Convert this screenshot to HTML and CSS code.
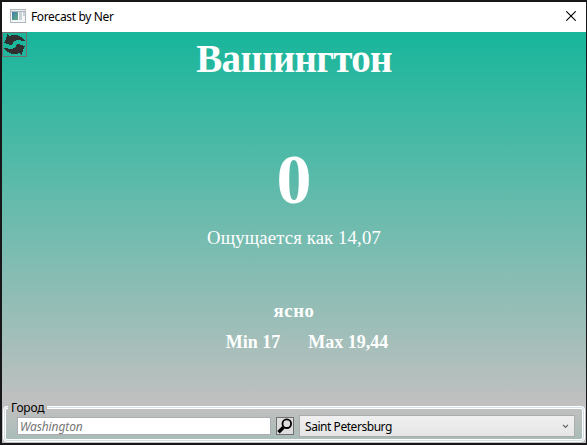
FILE: index.html
```html
<!DOCTYPE html>
<html lang="ru">
<head>
<meta charset="utf-8">
<title>Forecast by Ner</title>
<link rel="stylesheet" href="styles.css">
</head>
<body>
<div class="window">
  <header class="titlebar">
    <svg class="app-icon" width="16" height="14" viewBox="0 0 16 14">
      <defs><linearGradient id="pane" x1="0" y1="0" x2="1" y2="1"><stop offset="0" stop-color="#427fae"/><stop offset="1" stop-color="#61ad80"/></linearGradient></defs>
      <path fill="#b0b8bd" d="M0 0h16v14H0z"/><path fill="#e9edef" d="M1 1h14v1H1z"/><path fill="#f5f6f7" d="M1 3h14v10H1z"/>
      <path fill="url(#pane)" d="M2 3h6v8H2z"/><path fill="#c9d3d8" d="M9 3h3v8H9zM13 3h2v4h-2z"/>
    </svg>
    <span class="caption">Forecast by Ner</span>
    <svg class="close" width="10" height="10" viewBox="0 0 10 10"><path d="M.3.3l9.4 9.4M9.7.3L.3 9.7" stroke="#000" stroke-width="1.1"/></svg>
  </header>
  <main class="weather">
    <button class="refresh" aria-label="Обновить">
      <svg width="23" height="23" viewBox="0 0 23 23" fill="#303030">
        <path d="M4 1h1v1h1v1h2V2h7v1h2v1h2v1h1v1h1v1h1v1h-4V7h-5v1h-2v1h-1v2h-1v1H6v-1H3v-1H1V9h1V7h1V4h1z"/>
        <path d="M19 22h-1v-1h-1v-1h-2v1H8v-1H6v-1H4v-1H3v-1H2v-1H1v-1h4v1h5v-1h2v-1h1v-2h1v-1h3v1h3v1h2v1h-1v2h-1v3h-1z"/>
      </svg>
    </button>
    <h1 class="city">Вашингтон</h1>
    <div class="temp">0</div>
    <div class="feels">Ощущается как 14,07</div>
    <div class="sky">ясно</div>
    <div class="range"><span class="min">Min 17</span><span class="max">Max 19,44</span></div>
  </main>
  <fieldset class="search">
    <legend>Город</legend>
    <div class="controls">
      <div class="input"><span>Washington</span></div>
      <button class="find" aria-label="Найти">
        <svg width="16" height="16" viewBox="0 0 16 16"><circle cx="9.8" cy="5.7" r="4.3" fill="none" stroke="#000" stroke-width="1.8"/><path d="M1.5 14.2l5-5" stroke="#000" stroke-width="3.4"/></svg>
      </button>
      <div class="select"><span>Saint Petersburg</span>
        <svg width="7" height="5" viewBox="0 0 7 5"><path d="M1 .8l2.5 2.5L6 .8" fill="none" stroke="#606060" stroke-width="1.2"/></svg>
      </div>
    </div>
  </fieldset>
</div>
</body>
</html>
```
FILE: styles.css
```css
* { box-sizing: border-box; }
body { margin: 0; background: #17171a; font-family: "Noto Sans", sans-serif; font-size: 12px; color: #000; overflow: hidden; }
button { padding: 0; }
svg { display: block; }
.window {
  width: 587px; height: 445px; padding: 0;
  border: solid #17171a; border-width: 2px 1px 2px 2px;
  background: linear-gradient(#17b69b, #c0c0c0 371px, #c0c0c0) 0 30px no-repeat;
  display: flex; flex-direction: column;
}
.titlebar { height: 30px; flex: none; background: #fff; display: flex; align-items: center; padding: 0 10px 0 8px; }
.app-icon { margin-top: -2px; }
.caption { margin-left: 5px; margin-top: -1px; flex: 1; white-space: nowrap; letter-spacing: -0.36px; }
.close { margin-top: -2px; }
.weather { position: relative; height: 371px; flex: none; color: #fff; font-family: "Liberation Serif", serif; text-align: center; padding-top: 4px; }
.refresh { position: absolute; left: 0; top: 0; width: 25px; height: 25px; border: 1px solid #707070; background: transparent; }
.city { margin: 0; font-size: 39px; line-height: 46px; letter-spacing: -0.7px; }
.temp { font-size: 70px; font-weight: bold; line-height: 80px; margin-top: 58px; }
.feels { font-size: 18.67px; line-height: 22px; margin-top: 7px; letter-spacing: 0.16px; }
.sky { font-size: 18.67px; font-weight: bold; line-height: 22px; margin-top: 51px; letter-spacing: 0.6px; }
.range { font-size: 18px; font-weight: bold; line-height: 22px; margin-top: 9px; display: flex; justify-content: center; gap: 28px; padding-left: 26px; }
.search {
  position: relative; flex: none; margin: 0 1px; padding: 0; height: 39px; min-width: 0;
  border: 3px double #fff; border-radius: 4px;
  background: linear-gradient(#bfc0bf, #a9bcb8) padding-box, linear-gradient(#d5dfe5, #d5dfe5) border-box;
}
.search legend { margin-left: 2px; padding: 0 3px; height: 9px; line-height: 9px; letter-spacing: -0.2px; background: #bfbfbf; }
.controls { display: flex; padding: 5px 7px 0 11px; }
.input { width: 254px; height: 18px; background: #fff; border: 1px solid #abadb3; color: #777; font-style: italic; line-height: 17px; padding-left: 2px; letter-spacing: -0.1px; }
.find { width: 18px; height: 18px; margin: 0 5px; border: 1px solid #707070; background: #ddd; }
.select { flex: 1; height: 22px; margin-top: -2px; border: 1px solid #acacac; background: linear-gradient(#f0f0f0, #e5e5e5); display: flex; justify-content: space-between; align-items: center; padding: 0 5px; letter-spacing: -0.45px; }
```
